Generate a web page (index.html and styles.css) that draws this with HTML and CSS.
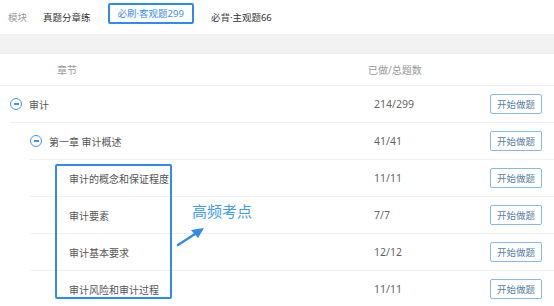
FILE: index.html
```html
<!DOCTYPE html>
<html lang="zh-CN">
<head>
    <meta charset="UTF-8">
    <title>章节练习</title>
    <link rel="stylesheet" href="styles.css">
</head>
<body>
    <!-- Tabs -->
    <div class="tabs">
        <span class="tab-label">模块</span>
        <span class="tab">真题分章练</span>
        <span class="tab active">必刷·客观题299</span>
        <span class="tab">必背·主观题66</span>
    </div>

    <div class="grey-bar"></div>

    <!-- Chapter list -->
    <div class="list">
        <div class="list-head">
            <span class="col-name">章节</span>
            <span class="col-count">已做/总题数</span>
        </div>

        <div class="row level-1">
            <span class="name"><i class="minus"></i>审计</span>
            <span class="count">214/299</span>
            <button class="start">开始做题</button>
        </div>
        <div class="row level-2">
            <span class="name"><i class="minus"></i>第一章 审计概述</span>
            <span class="count">41/41</span>
            <button class="start">开始做题</button>
        </div>
        <div class="row level-3">
            <span class="name">审计的概念和保证程度</span>
            <span class="count">11/11</span>
            <button class="start">开始做题</button>
        </div>
        <div class="row level-3">
            <span class="name">审计要素</span>
            <span class="count">7/7</span>
            <button class="start">开始做题</button>
        </div>
        <div class="row level-3">
            <span class="name">审计基本要求</span>
            <span class="count">12/12</span>
            <button class="start">开始做题</button>
        </div>
        <div class="row level-3">
            <span class="name">审计风险和审计过程</span>
            <span class="count">11/11</span>
            <button class="start">开始做题</button>
        </div>

        <!-- Annotation -->
        <div class="highlight-box"></div>
        <div class="note">高频考点</div>
        <svg class="note-arrow" width="30" height="22" viewBox="0 0 30 22">
            <line x1="2" y1="20" x2="22" y2="7" stroke="#2d8cf0" stroke-width="2.4" stroke-linecap="round"/>
            <polygon points="28,3 15,5 22,13" fill="#2d8cf0"/>
        </svg>
    </div>
</body>
</html>
```

FILE: styles.css
```css
/* General */
body {
    margin: 0;
    font-family: "Noto Sans", "Noto Sans CJK SC", sans-serif;
    font-size: 10px;
    color: #555;
    background: #fff;
}

/* Tabs */
.tabs {
    display: flex;
    align-items: center;
    height: 34px;
    padding-left: 8px;
    font-size: 9.5px;
}

.tab-label {
    color: #999;
    margin-right: 16px;
}

.tab {
    color: #333;
    margin-right: 17px;
}

.tab.active {
    color: #3a8ee6;
    border: 2px solid #2d8cf0;
    border-radius: 2px;
    padding: 0 8px;
    height: 17px;
    line-height: 17px;
    margin-top: -8px;
}

.grey-bar {
    height: 19px;
    background: #f2f2f2;
    border-bottom: 1px solid #ececec;
}

/* List */
.list {
    position: relative;
}

.list-head {
    display: flex;
    align-items: center;
    height: 31px;
    border-bottom: 1px solid #f0f0f0;
    color: #999;
}

.col-name {
    padding-left: 57px;
    flex: 1;
}

.col-count {
    width: 186px;
}

.row {
    display: flex;
    align-items: center;
    height: 36px;
    border-bottom: 1px solid #f0f0f0;
}

.row.level-1 {
    margin-left: 10px;
}

.row.level-2,
.row.level-3 {
    margin-left: 30px;
}

.row.level-3 .name {
    padding-left: 39px;
}

.name {
    flex: 1;
    display: flex;
    align-items: center;
}

.minus {
    position: relative;
    width: 10px;
    height: 10px;
    border: 1.5px solid #3f96f0;
    border-radius: 50%;
    margin-right: 7px;
}

.minus::after {
    content: "";
    position: absolute;
    left: 2.5px;
    right: 2.5px;
    top: 4.3px;
    height: 1.4px;
    background: #3f96f0;
}

.count {
    width: 116px;
    color: #666;
    font-size: 10.5px;
}

.start {
    width: 52px;
    height: 20px;
    margin-right: 12px;
    padding: 0;
    background: #fff;
    border: 1px solid #8ab8e6;
    border-radius: 2px;
    color: #5a7fa6;
    font-family: inherit;
    font-size: 9.5px;
}

/* Annotation */
.highlight-box {
    position: absolute;
    left: 55px;
    top: 110px;
    width: 113px;
    height: 131px;
    border: 2px solid #2d8cf0;
    border-radius: 2px;
}

.note {
    position: absolute;
    left: 192px;
    top: 146px;
    font-size: 15px;
    color: #3d9cf0;
}

.note-arrow {
    position: absolute;
    left: 176px;
    top: 171px;
}
```
